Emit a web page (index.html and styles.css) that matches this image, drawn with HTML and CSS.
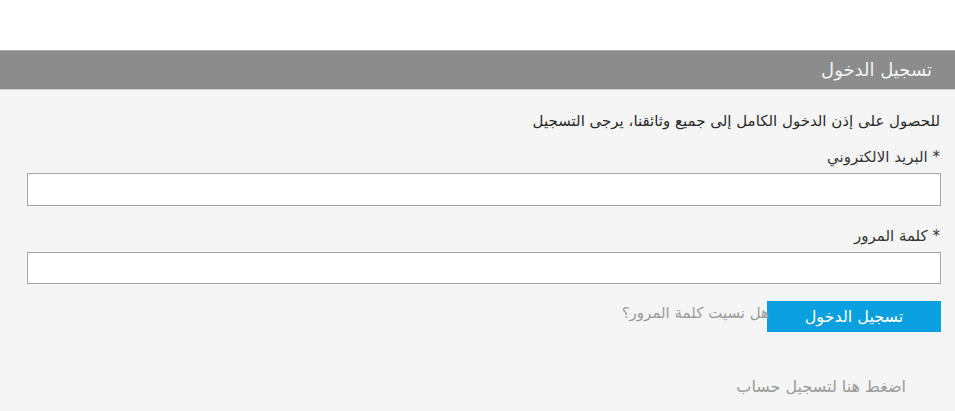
FILE: index.html
```html
<!DOCTYPE html>
<html lang="ar" dir="rtl">
<head>
<meta charset="utf-8">
<title>تسجيل الدخول</title>
<link rel="stylesheet" href="styles.css">
</head>
<body>
<div class="spacer"></div>
<section class="login">
  <div class="login-head">تسجيل الدخول</div>
  <div class="login-body">
    <p class="intro">للحصول على إذن الدخول الكامل إلى جميع وثائقنا، يرجى التسجيل</p>
    <label class="field-label">* البريد الالكتروني</label>
    <input class="field" type="text">
    <label class="field-label second">* كلمة المرور</label>
    <input class="field" type="password">
    <div class="actions">
      <button class="btn">تسجيل الدخول</button>
      <a class="forgot">هل نسيت كلمة المرور؟</a>
    </div>
    <a class="register">اضغط هنا لتسجيل حساب</a>
  </div>
</section>
</body>
</html>
```
FILE: styles.css
```css
html, body {
  margin: 0;
  padding: 0;
  background: #ffffff;
  font-family: "DejaVu Sans", "Noto Sans", sans-serif;
}
.spacer {
  height: 50px;
}
.login {
  background: #f5f5f5;
  height: 361px;
  overflow: hidden;
}
.login-head {
  height: 38px;
  background: #8c8c8c;
  border-top: 1px solid #a9a9a9;
  border-bottom: 1px solid #cfcfcf;
  color: #f4f4f4;
  font-size: 18px;
  line-height: 38px;
  padding-right: 23px;
}
.login-body {
  display: flex;
  flex-direction: column;
  align-items: stretch;
  padding: 0 14px 0 27px;
}
.intro {
  margin: 21px 1px 0 0;
  font-size: 15px;
  line-height: 20px;
  color: #2a2a2a;
}
.field-label {
  margin-top: 16px;
  font-size: 15px;
  line-height: 20px;
  color: #333;
  padding-right: 1px;
}
.field-label.second {
  margin-top: 20px;
}
.field {
  margin-top: 6px;
  box-sizing: border-box;
  height: 33px;
  border: 1px solid #a6a6a6;
  background: #fff;
  padding: 0 6px;
  font: inherit;
}
.field + .field-label + .field {
  height: 32px;
}
.actions {
  margin-top: 17px;
  display: flex;
  align-items: flex-start;
}
.btn {
  width: 174px;
  height: 31px;
  background: #0aa0df;
  border: none;
  color: #fff;
  font-family: inherit;
  font-size: 16px;
  padding: 0;
}
.forgot {
  color: #9a9a9a;
  font-size: 15px;
  line-height: 24px;
  margin-top: 0;
  margin-right: -2px;
}
.register {
  margin-top: 44px;
  margin-right: 35px;
  color: #9a9a9a;
  font-size: 16px;
  line-height: 22px;
}
```
